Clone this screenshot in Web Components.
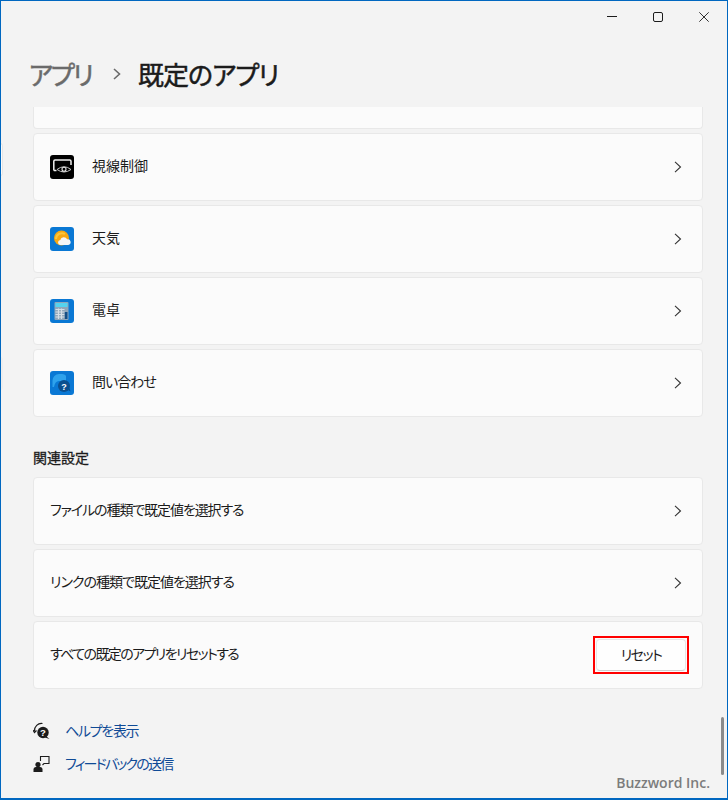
<!DOCTYPE html>
<html lang="ja">
<head>
<meta charset="utf-8">
<title>既定のアプリ</title>
<style>
    html, body { margin: 0; padding: 0; background: #f3f3f3; }
    body { font-family: "Noto Sans CJK JP", "Noto Sans", sans-serif; color: #1b1b1b; }
</style>
</head>
<body>

<settings-window>
    <window-caption slot="caption"></window-caption>
    <page-header slot="header" parent="アプリ" current="既定のアプリ"></page-header>

    <setting-row clipped></setting-row>
    <setting-row label="視線制御" link>
        <svg slot="icon" viewBox="0 0 24 24" width="24" height="24">
            <rect width="24" height="24" rx="3" fill="#000"/>
            <path d="M3.800 15.500V6.200Q3.800 5 5 5H19.800Q21 5 21 6.200V10" fill="none" stroke="#f0f0f0" stroke-width="1.500"/>
            <path d="M3.800 15.500H6.500" stroke="#f0f0f0" stroke-width="1.500" fill="none"/>
            <path d="M7 14.500Q14 9 21 14.500Q14 19.500 7 14.500Z" fill="#000" stroke="#c8c8c8" stroke-width="1"/>
            <circle cx="14" cy="14.300" r="2" fill="none" stroke="#e8e8e8" stroke-width="1.100"/>
        </svg>
    </setting-row>
    <setting-row label="天気" link>
        <svg slot="icon" viewBox="0 0 24 24" width="24" height="24">
            <rect width="24" height="24" rx="3" fill="#0a78d4"/>
            <circle cx="11.500" cy="11" r="7.500" fill="#f7a813"/>
            <path d="M6 12a6 6 0 0 1 9-5" fill="none" stroke="#fcc63a" stroke-width="2"/>
            <path d="M10 18a2.600 2.600 0 0 1 .3-5.100a3.600 3.600 0 0 1 6.800-.6a2.900 2.900 0 0 1 1.200 5.700Z" fill="#f6f6f6"/>
        </svg>
    </setting-row>
    <setting-row label="電卓" link>
        <svg slot="icon" viewBox="0 0 24 24" width="24" height="24">
            <rect width="24" height="24" rx="3" fill="#0a78d4"/>
            <rect x="4.500" y="3" width="14" height="18" rx="1" fill="#8fa6ba"/>
            <rect x="5.500" y="4" width="12" height="4" fill="#55d3ee"/>
            <path d="M5.500 10.500H14.500M5.500 13H14.500M5.500 15.500H14.500M5.500 18H14.500M8.500 9.500V20M11.500 9.500V20" stroke="#d5dee6" stroke-width="1.200"/>
            <rect x="14.800" y="13" width="2.700" height="7" fill="#144e86"/>
        </svg>
    </setting-row>
    <setting-row label="問い合わせ" link style="--track: -1px">
        <svg slot="icon" viewBox="0 0 24 24" width="24" height="24">
            <rect width="24" height="24" rx="3" fill="#0a78d4"/>
            <path d="M2.500 16V9.500a6.500 6.500 0 0 1 6.500-6.500h3a5 5 0 0 1 4 1.800V10H9Q5 10 4 16Z" fill="#2ea2ec"/>
            <circle cx="14" cy="15" r="6" fill="#0b4f8f"/>
            <path d="M18 19l2.500 1.500-1-3.500Z" fill="#0b4f8f"/>
            <text x="14" y="18.500" text-anchor="middle" font-family="Liberation Sans" font-weight="700" font-size="9" fill="#fff">?</text>
        </svg>
    </setting-row>

    <section-title>関連設定</section-title>

    <setting-row label="ファイルの種類で既定値を選択する" link style="--track: -1.1px"></setting-row>
    <setting-row label="リンクの種類で既定値を選択する" link style="--track: -1px"></setting-row>
    <setting-row label="すべての既定のアプリをリセットする" style="--track: -1.6px">
        <reset-button slot="action">リセット</reset-button>
    </setting-row>

    <div slot="footer">
        <footer-link label="ヘルプを表示" style="--track: -1.3px">
            <svg slot="icon" viewBox="0 0 18 18" width="18" height="18">
                <path d="M1.500 10a7 7 0 0 1 8-7.500" fill="none" stroke="#1b1b1b" stroke-width="1.200"/>
                <path d="M0 9l1.500 2.500 2-2" fill="none" stroke="#1b1b1b" stroke-width="1.200"/>
                <circle cx="10" cy="11.500" r="5.700" fill="#1b1b1b"/>
                <path d="M13 15l3.500 3-4.500-1.500Z" fill="#1b1b1b"/>
                <text x="10" y="15" text-anchor="middle" font-family="Liberation Sans" font-weight="700" font-size="9.500" fill="#fff">?</text>
            </svg>
        </footer-link>
        <footer-link label="フィードバックの送信" style="--track: -1.800px">
            <svg slot="icon" viewBox="0 0 18 18" width="18" height="18">
                <circle cx="5" cy="10.500" r="2.600" fill="#1b1b1b"/>
                <path d="M.5 18v-2.500Q.5 13 3 13h4Q9.500 13 9.500 15.500V18Z" fill="#1b1b1b"/>
                <path d="M7.500 7V2.500H16V9.500H11L9.500 11" fill="none" stroke="#1b1b1b" stroke-width="1.100"/>
            </svg>
        </footer-link>
    </div>
</settings-window>

<script>
// Outer window: blue frame, fixed caption and header, content below
const windowTemplate = document.createElement('template');
windowTemplate.innerHTML = `
    <style>
        :host{
            display: block;
            position: relative;
            box-sizing: border-box;
            width: 728px;
            height: 800px;
            overflow: hidden;
            background: #f3f3f3;
            border: 1px solid #0067c0;
            border-bottom-width: 2px;
            font-size: 14px;
            color: #1b1b1b;
            font-feature-settings: "palt";
        }
        .content{
            display: flex;
            flex-direction: column;
            gap: 4px;
            padding: 0 24px 0 32px;
        }
        .footer{
            padding: 24px 0 0 32px;
        }
        /* nav rail items peeking in at the left edge */
        .rail{
            position: absolute;
            left: -1px;
            width: 3px;
            border-radius: 0 3px 3px 0;
        }
        .rail.one{ top: 142px; height: 31px; background: #fbfbfb; border: 1px solid #e6e6e6; border-left: 0; width: 2px; }
        .rail.two{ top: 356px; height: 33px; background: #eeeeee; }
        .thumb{
            position: absolute;
            left: 720px;
            top: 716px;
            width: 3px;
            height: 58px;
            border-radius: 2px;
            background: #8a8a8a;
        }
        .mark{
            position: absolute;
            right: 17px;
            bottom: 6px;
            font: 600 14px "Open Sans", sans-serif;
            color: #7c7c7c;
        }
    </style>
    <slot name="caption"></slot>
    <slot name="header"></slot>
    <div class="content"><slot></slot></div>
    <div class="footer"><slot name="footer"></slot></div>
    <div class="rail one"></div>
    <div class="rail two"></div>
    <div class="thumb"></div>
    <div class="mark">Buzzword Inc.</div>
`;

class SettingsWindow extends HTMLElement {
    constructor() {
        super();
        this.attachShadow({ mode: 'open' });
        this.shadowRoot.appendChild(windowTemplate.content.cloneNode(true));
    }
}

// Minimize, maximize, close
const captionTemplate = document.createElement('template');
captionTemplate.innerHTML = `
    <style>
        :host{
            display: flex;
            justify-content: flex-end;
            height: 31px;
        }
        .btn{
            width: 46px;
            display: flex;
            align-items: center;
            justify-content: center;
            padding-top: 1px;
        }
        svg{ display: block; }
    </style>
    <div class="btn"><svg width="10" height="10" viewBox="0 0 10 10"><path d="M0 4.500H10" stroke="#1b1b1b"/></svg></div>
    <div class="btn"><svg width="10" height="10" viewBox="0 0 10 10"><rect x=".5" y=".5" width="9" height="9" rx="1.500" fill="none" stroke="#1b1b1b"/></svg></div>
    <div class="btn"><svg width="10" height="10" viewBox="0 0 10 10"><path d="M.3 .3L9.700 9.700M9.700 .3L.3 9.700" stroke="#1b1b1b" stroke-width=".9"/></svg></div>
`;

class WindowCaption extends HTMLElement {
    constructor() {
        super();
        this.attachShadow({ mode: 'open' });
        this.shadowRoot.appendChild(captionTemplate.content.cloneNode(true));
    }
}

// Breadcrumb title
const headerTemplate = document.createElement('template');
headerTemplate.innerHTML = `
    <style>
        :host{
            display: flex;
            align-items: center;
            box-sizing: border-box;
            height: 75px;
            padding: 9px 0 0 28px;
            font-size: 26px;
            font-weight: 400;
            -webkit-text-stroke: .5px currentColor;
            line-height: 36px;
            white-space: nowrap;
        }
        .parent{ color: #6a6a6a; width: 62px; letter-spacing: -2.300px; }
        .current{ letter-spacing: -1px; }
        svg{ margin: 0 17px 0 22px; }
    </style>
    <span class="parent"></span>
    <svg width="8" height="12" viewBox="0 0 8 12"><path d="M1 1l5.500 5L1 11" fill="none" stroke="#6a6a6a" stroke-width="1.600"/></svg>
    <span class="current"></span>
`;

class PageHeader extends HTMLElement {
    constructor() {
        super();
        this.attachShadow({ mode: 'open' });
        this.shadowRoot.appendChild(headerTemplate.content.cloneNode(true));
        this.shadowRoot.querySelector('.parent').textContent = this.getAttribute('parent');
        this.shadowRoot.querySelector('.current').textContent = this.getAttribute('current');
    }
}

// One card in the list
const rowTemplate = document.createElement('template');
rowTemplate.innerHTML = `
    <style>
        :host{
            display: flex;
            align-items: center;
            box-sizing: border-box;
            height: 68px;
            padding: 0 16px;
            background: #fbfbfb;
            border: 1px solid #e8e8e8;
            border-radius: 4px;
        }
        :host([clipped]){
            height: 22px;
            border-top: 0;
            border-radius: 0 0 4px 4px;
        }
        .icon{ display: flex; margin-right: 18px; }
        ::slotted(svg){ display: block; }
        .label{ flex: 1; line-height: 20px; white-space: nowrap; margin-bottom: 5px; letter-spacing: var(--track, 0); }
        .chev{ display: none; margin-right: 4px; }
        :host([link]) .chev{ display: block; }
    </style>
    <div class="icon"><slot name="icon"></slot></div>
    <div class="label"></div>
    <slot name="action"></slot>
    <svg class="chev" width="8" height="12" viewBox="0 0 8 12"><path d="M1 .8l5.500 5.200L1 11.200" fill="none" stroke="#333" stroke-width="1.100"/></svg>
`;

class SettingRow extends HTMLElement {
    constructor() {
        super();
        this.attachShadow({ mode: 'open' });
        this.shadowRoot.appendChild(rowTemplate.content.cloneNode(true));
        this.shadowRoot.querySelector('.label').textContent = this.getAttribute('label') || '';
        // rows without an icon start right at the padding
        if (!this.querySelector('[slot=icon]')) {
            this.shadowRoot.querySelector('.icon').style.display = 'none';
        }
    }
}

// Heading above a group of rows
const sectionTemplate = document.createElement('template');
sectionTemplate.innerHTML = `
    <style>
        :host{
            display: block;
            height: 20px;
            padding: 26px 0 6px;
            font-weight: 400;
            -webkit-text-stroke: .3px currentColor;
            line-height: 20px;
        }
    </style>
    <slot></slot>
`;

class SectionTitle extends HTMLElement {
    constructor() {
        super();
        this.attachShadow({ mode: 'open' });
        this.shadowRoot.appendChild(sectionTemplate.content.cloneNode(true));
    }
}

// Button with the red highlight frame around it
const buttonTemplate = document.createElement('template');
buttonTemplate.innerHTML = `
    <style>
        :host{
            display: flex;
            position: relative;
            align-items: center;
            justify-content: center;
            box-sizing: border-box;
            width: 90px;
            height: 32px;
            padding-bottom: 3px;
            background: #fefefe;
            border: 1px solid #e6e6e6;
            border-bottom-color: #cfcfcf;
            border-radius: 4px;
            letter-spacing: -1.500px;
        }
        .frame{
            position: absolute;
            inset: -4px;
            border: 2px solid #ff0000;
        }
    </style>
    <slot></slot>
    <div class="frame"></div>
`;

class ResetButton extends HTMLElement {
    constructor() {
        super();
        this.attachShadow({ mode: 'open' });
        this.shadowRoot.appendChild(buttonTemplate.content.cloneNode(true));
    }
}

// Help and feedback links
const linkTemplate = document.createElement('template');
linkTemplate.innerHTML = `
    <style>
        :host{
            display: flex;
            align-items: center;
            height: 33px;
            color: #0f4a96;
            line-height: 20px;
        }
        .icon{ width: 32px; display: flex; }
        ::slotted(svg){ display: block; }
        .label{ letter-spacing: var(--track, 0); }
    </style>
    <div class="icon"><slot name="icon"></slot></div>
    <span class="label"></span>
`;

class FooterLink extends HTMLElement {
    constructor() {
        super();
        this.attachShadow({ mode: 'open' });
        this.shadowRoot.appendChild(linkTemplate.content.cloneNode(true));
        this.shadowRoot.querySelector('.label').textContent = this.getAttribute('label');
    }
}

customElements.define('settings-window', SettingsWindow);
customElements.define('window-caption', WindowCaption);
customElements.define('page-header', PageHeader);
customElements.define('setting-row', SettingRow);
customElements.define('section-title', SectionTitle);
customElements.define('reset-button', ResetButton);
customElements.define('footer-link', FooterLink);
</script>
</body>
</html>
